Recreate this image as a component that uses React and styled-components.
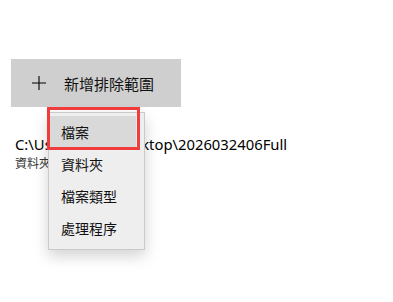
import React from "react";
import styled, { createGlobalStyle } from "styled-components";

const GlobalStyle = createGlobalStyle`
  body {
    margin: 0;
    background: #ffffff;
    font-family: "Noto Sans", "Noto Sans CJK TC", sans-serif;
  }
`;

const Page = styled.div`
  position: relative;
  width: 393px;
  height: 302px;
  padding: 59px 0 0 11px;
  box-sizing: border-box;
  overflow: hidden;
`;

const AddButton = styled.div`
  display: flex;
  align-items: center;
  width: 170px;
  height: 48px;
  background: #cfcfcf;
  color: #111;
`;

const PlusIcon = styled.svg`
  width: 16px;
  height: 16px;
  margin: 0 17px 0 20px;
`;

const ButtonLabel = styled.span`
  font-size: 15px;
  font-family: "Noto Sans CJK TC", sans-serif;
`;

const Entry = styled.div`
  margin: 27px 0 0 4px;
  display: flex;
  flex-direction: column;
`;

const PathText = styled.div`
  font-size: 14.8px;
  color: #000;
  line-height: 20px;
`;

const TypeText = styled.div`
  font-size: 12px;
  color: #333;
  line-height: 17px;
  font-family: "Noto Sans CJK TC", sans-serif;
`;

const Menu = styled.div`
  position: absolute;
  left: 48px;
  top: 112px;
  width: 97px;
  padding: 3px 0 5px;
  box-sizing: border-box;
  background: #eeeeee;
  border: 1px solid #cacaca;
  box-shadow: 0 6px 14px rgba(0, 0, 0, 0.18);
  display: flex;
  flex-direction: column;
`;

const MenuItem = styled.div`
  height: 32px;
  display: flex;
  align-items: center;
  padding-left: 12px;
  margin-right: ${({ $active }) => ($active ? "8px" : "0")};
  background: ${({ $active }) => ($active ? "#d9d9d9" : "transparent")};
  font-size: 14px;
  color: #111;
  font-family: "Noto Sans CJK TC", sans-serif;
`;

const Highlight = styled.div`
  position: absolute;
  left: 47px;
  top: 107px;
  width: 93px;
  height: 43px;
  box-sizing: border-box;
  border: 3px solid #f03c3c;
`;

const items = ["檔案", "資料夾", "檔案類型", "處理程序"];

export default function App() {
  return (
    <Page>
      <GlobalStyle />
      <AddButton>
        <PlusIcon viewBox="0 0 16 16">
          <path d="M8 1v14M1 8h14" stroke="#000" strokeWidth="1.1" fill="none" />
        </PlusIcon>
        <ButtonLabel>新增排除範圍</ButtonLabel>
      </AddButton>
      <Entry>
        <PathText>C:\Users\user\Desktop\2026032406Full</PathText>
        <TypeText>資料夾</TypeText>
      </Entry>
      <Menu>
        {items.map((item, i) => (
          <MenuItem key={item} $active={i === 0}>
            {item}
          </MenuItem>
        ))}
      </Menu>
      <Highlight />
    </Page>
  );
}
